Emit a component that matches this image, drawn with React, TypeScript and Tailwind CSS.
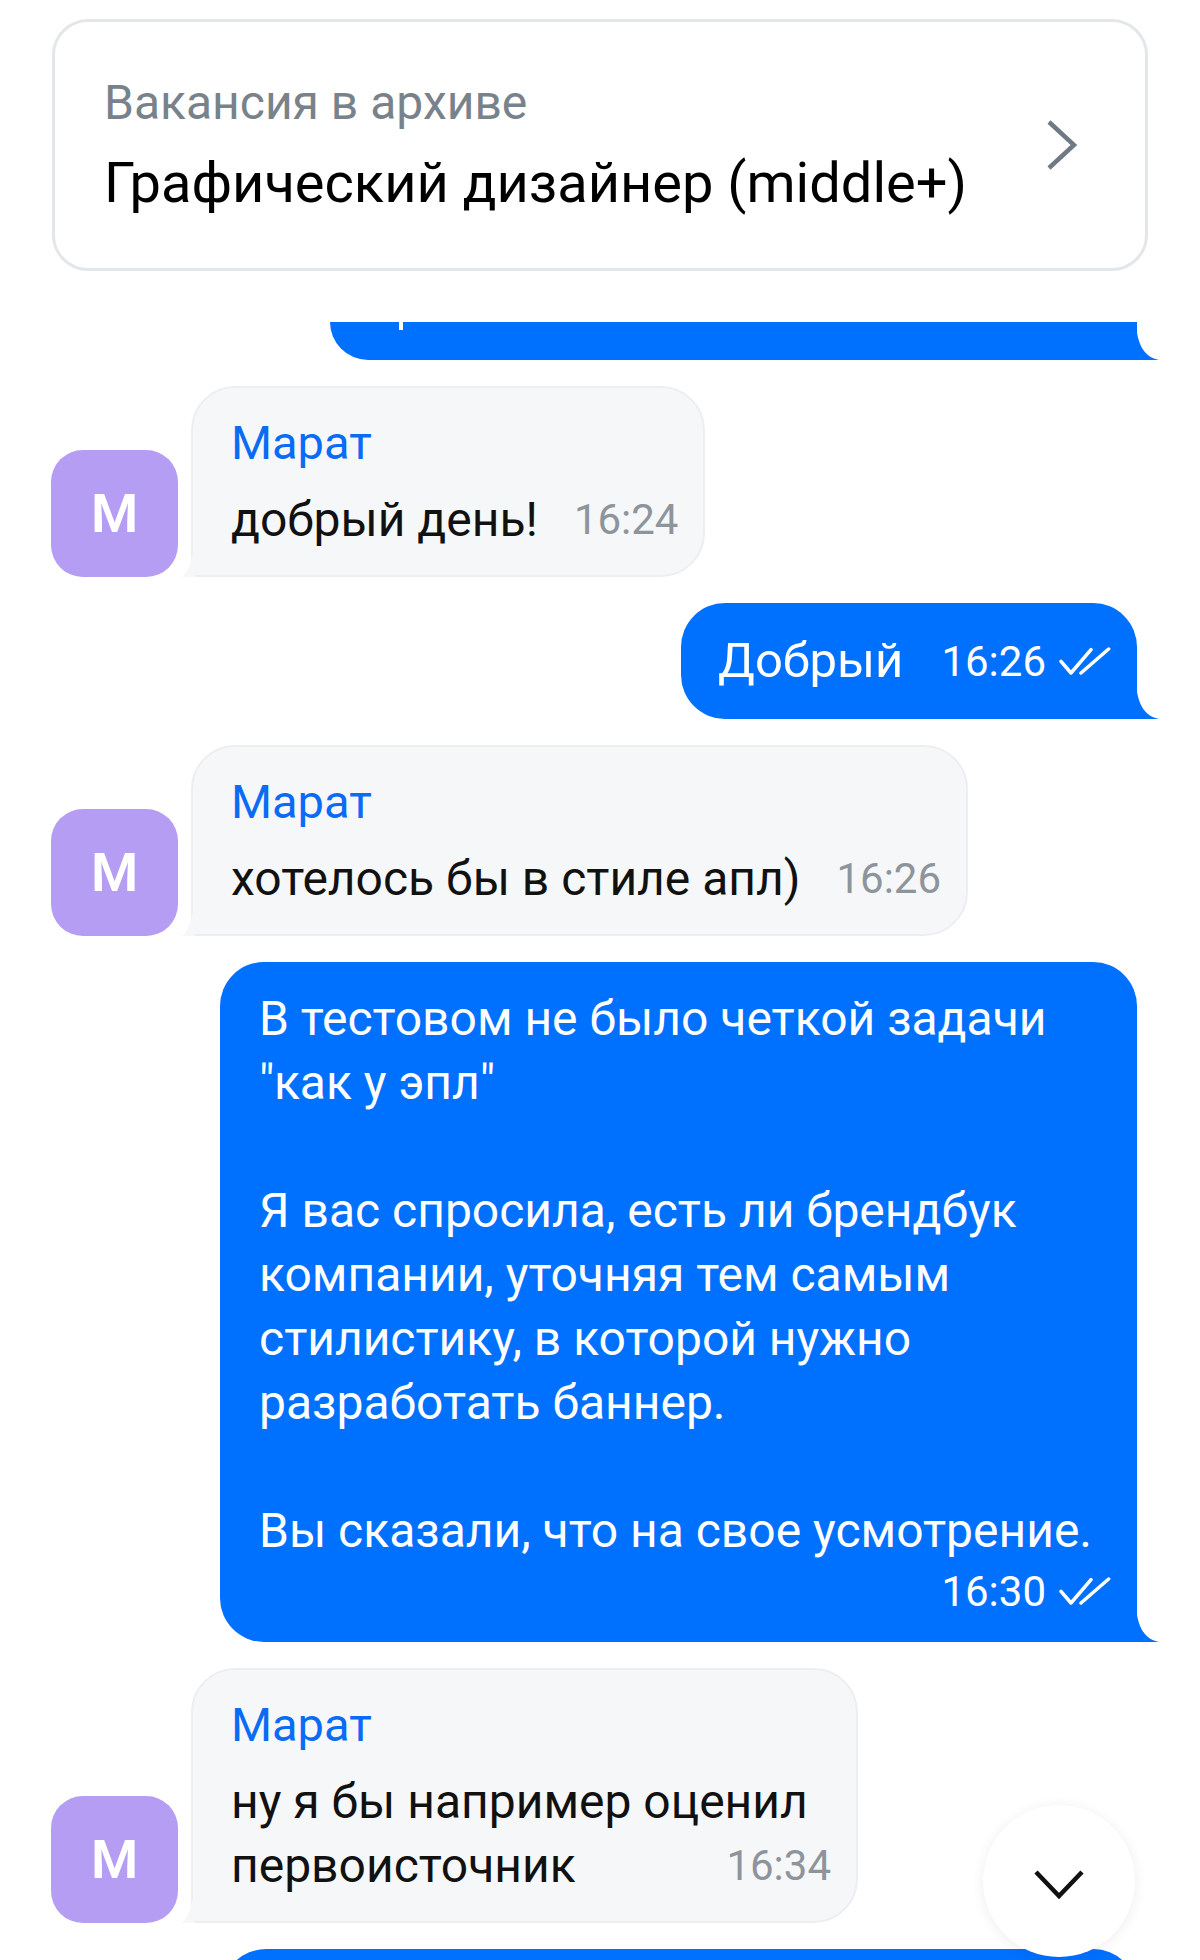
import React from "react";

const OutTail = () => (
  <svg
    className="absolute bottom-0 right-[-22px]"
    width="23"
    height="38"
    viewBox="0 0 23 38"
  >
    <path d="M0 0 C1 24 9 35 23 38 L0 38 Z" fill="#0070ff" />
  </svg>
);

const InTail = () => (
  <svg
    className="absolute bottom-[-2px] left-[-11px]"
    width="13"
    height="46"
    viewBox="0 0 13 46"
  >
    <path d="M13 0 C12 24 8 39 0 46 L13 46 Z" fill="#f6f7f8" />
  </svg>
);

const Checks = () => (
  <svg
    width="52"
    height="28"
    viewBox="-2 -2 52 28"
    fill="none"
    stroke="white"
    strokeWidth="3.5"
    strokeLinecap="round"
    strokeLinejoin="round"
  >
    <path d="M0 12.3 L10 24 L30 0.7" />
    <path d="M20 24 L47.6 0" />
  </svg>
);

const Avatar = () => (
  <div className="w-[127px] h-[127px] shrink-0 rounded-[32px] bg-[#b59df4] flex items-center justify-center text-white text-[54px] font-semibold">
    М
  </div>
);

const Incoming = ({
  lines,
  time,
  width,
}: {
  lines: string[];
  time: string;
  width?: string;
}) => {
  const last = lines[lines.length - 1];
  const rest = lines.slice(0, -1);
  return (
    <div className="flex items-end pl-[51px]">
      <Avatar />
      <div
        className={`relative ml-[13px] bg-[#f6f7f8] border-2 border-[#eceef1] rounded-[44px] rounded-bl-none pl-[38px] pr-[25px] pt-[23px] pb-[23px] ${width ?? ""}`}
      >
        <InTail />
        <div className="text-[47px] leading-[64px] text-[#0a6cf5]">Марат</div>
        <div className="mt-[13px] text-[48px] leading-[64px] text-[#111]">
          {rest.map((l) => (
            <div key={l}>{l}</div>
          ))}
          <div className="flex items-center justify-between">
            <span>{last}</span>
            <span className="ml-[36px] text-[42px] text-[#8d949b]">{time}</span>
          </div>
        </div>
      </div>
    </div>
  );
};

const longText = [
  "В тестовом не было четкой задачи",
  "\"как у эпл\"",
  "",
  "Я вас спросила, есть ли брендбук",
  "компании, уточняя тем самым",
  "стилистику, в которой нужно",
  "разработать баннер.",
  "",
  "Вы сказали, что на свое усмотрение.",
];

export default function App() {
  return (
    <div className="relative w-[1200px] h-[1960px] overflow-hidden bg-white font-[Roboto,sans-serif]">
      {/* vacancy header */}
      <div className="px-[52px] pt-[19px]">
        <div className="h-[252px] rounded-[36px] border-[3px] border-[#e4e7ea] flex items-center justify-between pl-[49px] pr-[68px]">
          <div>
            <div className="text-[48px] leading-[56px] text-[#78828b]">
              Вакансия в архиве
            </div>
            <div className="mt-[20px] text-[56px] leading-[64px] text-black">
              Графический дизайнер (middle+)
            </div>
          </div>
          <svg width="31" height="52" viewBox="0 0 31 52" fill="none">
            <path
              d="M3 3 L28 26 L3 49"
              stroke="#6f7a84"
              strokeWidth="4.5"
              strokeLinejoin="miter"
            />
          </svg>
        </div>
      </div>

      {/* chat */}
      <div className="flex flex-col gap-[26px] mt-[51px]">
        <div className="flex justify-end pr-[63px]">
          <div className="relative w-[807px] h-[38px] bg-[#0070ff] rounded-bl-[40px]">
            <OutTail />
            <div className="absolute left-[69px] top-0 w-[4px] h-[8px] bg-white" />
          </div>
        </div>

        <Incoming lines={["добрый день!"]} time="16:24" />

        <div className="flex justify-end pr-[63px]">
          <div className="relative bg-[#0070ff] text-white rounded-[44px] rounded-br-none flex items-center pl-[37px] pr-[26px] py-[26px]">
            <span className="text-[49px] leading-[64px]">Добрый</span>
            <span className="ml-[38px] text-[42px]">16:26</span>
            <span className="ml-[13px]">
              <Checks />
            </span>
            <OutTail />
          </div>
        </div>

        <Incoming lines={["хотелось бы в стиле апл)"]} time="16:26" />

        <div className="flex justify-end pr-[63px]">
          <div className="relative w-[917px] bg-[#0070ff] text-white rounded-[44px] rounded-br-none pl-[39px] pr-[26px] pt-[25px] pb-[23px]">
            <div className="text-[48px] leading-[64px]">
              {longText.map((l, i) =>
                l ? <div key={i}>{l}</div> : <div key={i} className="h-[64px]" />
              )}
            </div>
            <div className="flex justify-end items-center h-[56px]">
              <span className="text-[42px]">16:30</span>
              <span className="ml-[13px]">
                <Checks />
              </span>
            </div>
            <OutTail />
          </div>
        </div>

        <Incoming
          lines={["ну я бы например оценил", "первоисточник"]}
          time="16:34"
          width="w-[667px]"
        />

        <div className="flex justify-end pr-[63px]">
          <div className="w-[915px] h-[60px] bg-[#0070ff] rounded-t-[44px]" />
        </div>
      </div>

      {/* scroll down */}
      <div className="absolute left-[983px] top-[1805px] w-[152px] h-[152px] rounded-full bg-white shadow-[0_2px_14px_rgba(0,0,0,0.07)] flex items-center justify-center">
        <svg className="mt-[8px]" width="52" height="32" viewBox="0 0 52 32" fill="none">
          <path d="M3 3 L26 27 L49 3" stroke="#111" strokeWidth="4.5" />
        </svg>
      </div>
    </div>
  );
}
